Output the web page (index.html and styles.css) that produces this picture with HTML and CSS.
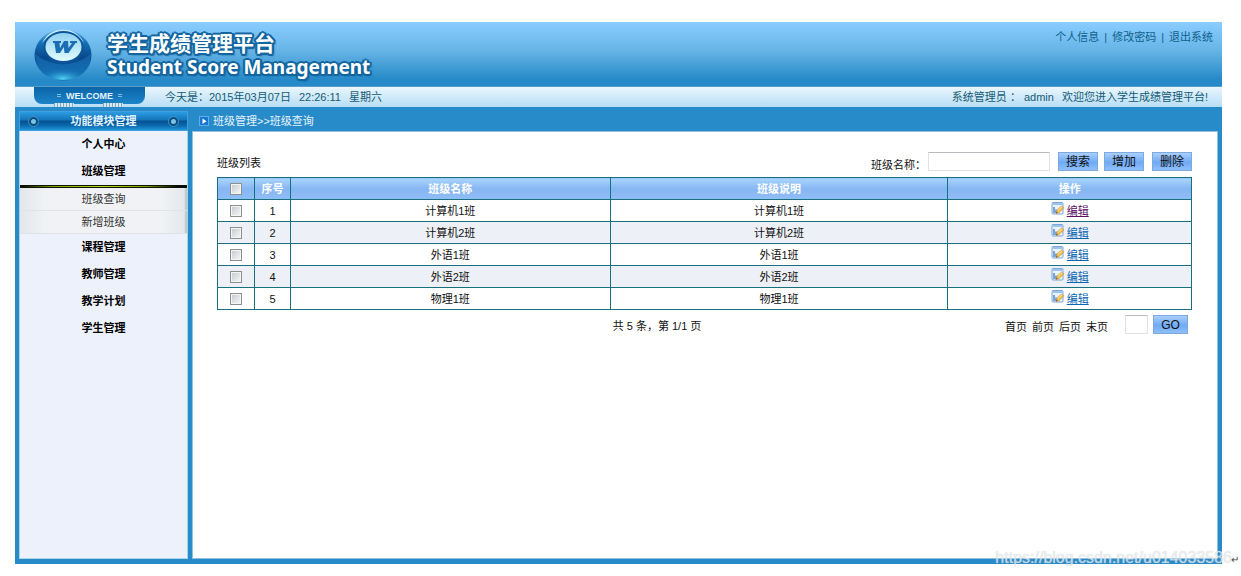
FILE: index.html
```html
<!DOCTYPE html>
<html lang="zh-CN">
<head>
<meta charset="utf-8">
<title>学生成绩管理平台</title>
<link rel="stylesheet" href="styles.css">
</head>
<body>
<svg class="defs" aria-hidden="true">
  <symbol id="edit-icon" viewBox="0 0 13 13">
    <rect x="1" y=".5" width="11" height="11.500" rx="1" fill="#e9f3fd" stroke="#7ba6d6"/>
    <path d="M1.500 2h10" stroke="#9cc4ee" stroke-width="2"/>
    <path d="M3 5v6M5 7.500v3.500" stroke="#3f78c4" stroke-width="1.300"/>
    <path d="M5 11.500l1-3.500 4.500-4 2.300 2-5 4.800z" fill="#f3bd4a" stroke="#c98f34" stroke-width=".6"/>
    <path d="M7 8.500l4-3.700" stroke="#fff0a8"/>
    <path d="M5 11.500l.6-1.700 1.300 1z" fill="#554"/>
  </symbol>
</svg>
<div class="page">
  <header class="header">
    <div class="brand">
      <svg class="logo" viewBox="0 0 60 54" aria-hidden="true">
        <defs>
          <linearGradient id="ball" x1="0" y1="0" x2="0" y2="1">
            <stop offset="0" stop-color="#5fb4ea"/><stop offset=".25" stop-color="#1672b8"/>
            <stop offset=".55" stop-color="#07478c"/><stop offset="1" stop-color="#1272b5"/>
          </linearGradient>
          <radialGradient id="glow" cx=".5" cy=".9" r=".6">
            <stop offset="0" stop-color="#4fd0f2"/><stop offset="1" stop-color="#1a7fc4" stop-opacity="0"/>
          </radialGradient>
          <linearGradient id="face" x1="0" y1="0" x2="0" y2="1">
            <stop offset="0" stop-color="#8fd0f2"/><stop offset="1" stop-color="#e2fbff"/>
          </linearGradient>
        </defs>
        <ellipse cx="30" cy="28" rx="28.500" ry="25.500" fill="url(#ball)"/>
        <path d="M2 27q28 21 56 0q-1 25-28 26.500Q4 52 2 27z" fill="#1b77bb" opacity=".55"/>
        <ellipse cx="30" cy="45" rx="20" ry="8" fill="url(#glow)"/>
        <path d="M9 16Q16 2.500 30 2.500T51 16Q43 5 30 5T9 16z" fill="#c4e9fb"/>
        <ellipse cx="30.500" cy="20" rx="20" ry="16" fill="#0d5599"/>
        <ellipse cx="30.500" cy="20" rx="18" ry="14" fill="url(#face)"/>
        <path d="M20 14h8v2h-1.500l.5 5 4-7h4l.5 7 3.500-5h-2v-2h7v2h-1.500l-7 10h-4l-.7-6-3.800 6h-4l-1.500-10H20z" fill="#1b6eb4"/>
      </svg>
      <h1 class="titles">
        <span class="title-cn">学生成绩管理平台</span>
        <span class="title-en">Student Score Management</span>
      </h1>
    </div>
    <nav class="account"><a href="#">个人信息</a><span>|</span><a href="#">修改密码</a><span>|</span><a href="#">退出系统</a></nav>
  </header>
  <div class="infobar">
    <div class="welcome"><i class="dash"></i>WELCOME<i class="dash"></i></div>
    <div class="today"><span>今天是：2015年03月07日</span><span>22:26:11</span><span>星期六</span></div>
    <div class="greeting"><span>系统管理员 ：&nbsp;admin</span><span>欢迎您进入学生成绩管理平台!</span></div>
  </div>
  <div class="body">
    <aside class="sidebar">
      <h2 class="side-title"><i class="dot"></i>功能模块管理<i class="dot"></i></h2>
      <nav class="menu">
        <a href="#">个人中心</a>
        <a href="#">班级管理</a>
        <div class="submenu">
          <a href="#">班级查询</a>
          <a href="#">新增班级</a>
        </div>
        <a href="#">课程管理</a>
        <a href="#">教师管理</a>
        <a href="#">教学计划</a>
        <a href="#">学生管理</a>
      </nav>
    </aside>
    <main class="main">
      <div class="crumbs">
        <svg class="crumb-icon" viewBox="0 0 10 10" aria-hidden="true"><rect x=".5" y=".5" width="9" height="9" fill="#1976cf" stroke="#5db0ee"/><path d="M3.500 2.500l4 2.700-4 2.700z" fill="#fff"/></svg>
        班级管理&gt;&gt;班级查询
      </div>
      <section class="panel">
        <div class="toolbar">
          <h3 class="list-title">班级列表</h3>
          <form class="search">
            <label for="name">班级名称：</label>
            <input class="field name" id="name" type="text">
            <button class="btn" type="button">搜索</button>
            <button class="btn add" type="button">增加</button>
            <button class="btn" type="button">删除</button>
          </form>
        </div>
        <table class="grid">
          <colgroup><col class="c-check"><col class="c-no"><col class="c-name"><col class="c-desc"><col class="c-op"></colgroup>
          <thead>
            <tr><th><input type="checkbox" aria-label="全选"></th><th>序号</th><th>班级名称</th><th>班级说明</th><th>操作</th></tr>
          </thead>
          <tbody>
            <tr><td><input type="checkbox" aria-label="选择 1"></td><td>1</td><td>计算机1班</td><td>计算机1班</td><td><svg class="edit"><use href="#edit-icon"/></svg><a class="seen" href="#">编辑</a></td></tr>
            <tr><td><input type="checkbox" aria-label="选择 2"></td><td>2</td><td>计算机2班</td><td>计算机2班</td><td><svg class="edit"><use href="#edit-icon"/></svg><a href="#">编辑</a></td></tr>
            <tr><td><input type="checkbox" aria-label="选择 3"></td><td>3</td><td>外语1班</td><td>外语1班</td><td><svg class="edit"><use href="#edit-icon"/></svg><a href="#">编辑</a></td></tr>
            <tr><td><input type="checkbox" aria-label="选择 4"></td><td>4</td><td>外语2班</td><td>外语2班</td><td><svg class="edit"><use href="#edit-icon"/></svg><a href="#">编辑</a></td></tr>
            <tr><td><input type="checkbox" aria-label="选择 5"></td><td>5</td><td>物理1班</td><td>物理1班</td><td><svg class="edit"><use href="#edit-icon"/></svg><a href="#">编辑</a></td></tr>
          </tbody>
        </table>
        <div class="pager">
          <span class="status">共 5 条，第 1/1 页</span>
          <nav class="pages"><a href="#">首页</a><a href="#">前页</a><a href="#">后页</a><a href="#">末页</a></nav>
          <input class="field pageno" type="text" aria-label="页码">
          <button class="btn go" type="button">GO</button>
        </div>
      </section>
    </main>
  </div>
  <div class="watermark"><span>https://blog.csdn.net/u014033586</span></div>
  <span class="return">↵</span>
</div>
</body>
</html>
```
FILE: styles.css
```css
*, *::before, *::after { box-sizing: border-box; }
body {
  margin: 0;
  background: #fff;
  color: #111;
  font: 11px/16px "Liberation Sans", "Noto Sans CJK SC", sans-serif;
}
a { color: inherit; text-decoration: none; }
h1, h2, h3 { margin: 0; font: inherit; }
.defs { position: absolute; width: 0; height: 0; }
.page {
  position: relative;
  display: flex;
  flex-direction: column;
  min-height: 100vh;
  padding: 22px 19px 12px 15px;
}

.header {
  display: flex;
  justify-content: space-between;
  height: 64px;
  padding: 5px 9px 0 18px;
  background: linear-gradient(#8acdff, #66b4e6 45%, #268ac8 90%);
}
.brand { display: flex; gap: 14px; }
.logo { width: 60px; height: 54px; }
.titles {
  display: flex;
  flex-direction: column;
  padding-top: 5px;
  color: #fff;
  font-weight: bold;
  text-shadow: 2px 0 #12659f, -2px 0 #12659f, 0 2px #12659f, 0 -2px #12659f,
    1px 2px #12659f, -1px 2px #12659f, 2px -1px #12659f, -2px -1px #12659f, 2px 2px 2px #0e5a92;
}
.title-cn { font-size: 21px; line-height: 24px; }
.title-en { font: bold 19px/22px "Noto Sans", sans-serif; }
.account { display: flex; gap: 5px; padding-top: 2px; color: #0f618b; }

.infobar {
  display: flex;
  height: 21px;
  border-top: 1px solid #5b9cc6;
  background: linear-gradient(#e9f6fe, #b7def5);
  color: #155b75;
  line-height: 20px;
}
.welcome {
  position: relative;
  display: flex;
  align-items: center;
  justify-content: center;
  gap: 5px;
  width: 111px;
  height: 17px;
  margin: 0 20px 0 19px;
  border-radius: 0 0 8px 8px;
  background: linear-gradient(#0b64a8, #1c84c8);
  color: #e4f3fd;
  font-size: 9px;
  font-weight: bold;
}
.welcome::before, .welcome::after {
  content: "";
  position: absolute;
  top: 16px;
  left: 20px;
  width: 20px;
  height: 4px;
  background: repeating-linear-gradient(90deg, #8aa9bd 0 1px, #d5e9f5 1px 3px);
}
.welcome::after { left: 69px; }
.dash { width: 4px; height: 3px; border: solid #7fbce4; border-width: 1px 0; }
.today { display: flex; gap: 8px; flex: 1; }
.greeting { display: flex; gap: 8px; padding-right: 14px; }

.body {
  display: flex;
  flex: 1;
  gap: 4px;
  padding: 4px 4px 5px;
  background: #288bc9;
}
.sidebar { display: flex; flex-direction: column; width: 169px; }
.side-title {
  display: flex;
  align-items: center;
  justify-content: space-between;
  height: 20px;
  padding: 0 9px;
  border: 1px solid #3fa0dd;
  background: linear-gradient(#2c9be0, #1474ba 45%, #04508f 50%, #0b69ad 75%, #1f93d8);
  color: #e0f2ff;
  font-weight: bold;
}
.dot {
  width: 9px;
  height: 9px;
  border: 2px solid #0b4c7c;
  border-radius: 50%;
  background: #7cc4e6;
  outline: 1px solid #3c93c9;
}
.menu {
  flex: 1;
  border: solid #a9d4e6;
  border-width: 0 1px 1px;
  background: #edf1fb;
  color: #000;
  text-align: center;
}
.menu > a { display: block; height: 27px; line-height: 27px; font-weight: bold; }
.submenu {
  background: linear-gradient(90deg, #e3e6ea, #f0f2f5 15%, #f0f2f5 85%, #e3e6ea);
  box-shadow: inset -3px 0 2px -1px #bfc4ca;
  color: #333;
}
.submenu::before {
  content: "";
  display: block;
  height: 3px;
  border: solid #0c1408;
  border-width: 1px 0;
  background: linear-gradient(90deg, #000, #88a000 20%, #c2df20 50%, #88a000 75%, #000 95%);
}
.submenu a { display: block; height: 23px; line-height: 23px; border-bottom: 1px solid #dfe3e8; }

.main { display: flex; flex: 1; flex-direction: column; }
.crumbs {
  display: flex;
  align-items: center;
  gap: 4px;
  height: 20px;
  padding-left: 7px;
  color: #e4f3fc;
}
.crumb-icon { width: 10px; height: 10px; }
.panel {
  flex: 1;
  padding: 20px 25px 0 24px;
  border: 1px solid #8fc0de;
  background: #fff;
}
.toolbar { display: flex; justify-content: space-between; height: 25px; }
.list-title { padding-top: 3px; }
.search { display: flex; align-items: flex-start; }
.search label { padding-top: 5px; }
.field {
  height: 19px;
  padding: 0 2px;
  border: 1px solid #dfe3e8;
  border-top-color: #b9bbc0;
  background: #fff;
  font: inherit;
}
.name { width: 122px; margin: 0 8px 0 2px; }
.btn {
  width: 40px;
  height: 19px;
  padding: 0;
  border: 1px solid #7ea9dc;
  background: linear-gradient(#a9cffc, #6faaf6 55%, #8fc0fb);
  color: #111;
  font: 12px/16px "Liberation Sans", "Noto Sans CJK SC", sans-serif;
}
.add { margin: 0 8px 0 6px; }

.grid { width: 100%; border-collapse: collapse; table-layout: fixed; border: 1px solid #16707e; }
.c-check { width: 3.8%; }
.c-no { width: 3.7%; }
.c-name { width: 32.8%; }
.c-desc { width: 34.7%; }
.c-op { width: 25%; }
.grid th, .grid td {
  height: 22px;
  padding: 0;
  border: 1px solid #16707e;
  line-height: 16px;
  text-align: center;
  vertical-align: middle;
}
.grid th { background: linear-gradient(#a9d4fb, #86b6f3 50%, #90bdf6); color: #fff; }
.grid tbody tr:nth-child(even) { background: #edf0f6; }
.grid input {
  appearance: none;
  display: block;
  width: 12px;
  height: 12px;
  margin: 0 auto;
  border: 1px solid #8e8f8f;
  background: linear-gradient(135deg, #c3c8cf, #f8f8f8);
  box-shadow: inset 0 0 0 1px #f4f4f4;
}
.grid a { color: #0b66b0; text-decoration: underline; vertical-align: middle; }
.grid a.seen { color: #5b1066; }
.edit { width: 13px; height: 13px; margin: 0 3px 4px 0; vertical-align: middle; }

.pager { display: flex; align-items: flex-start; padding: 5px 4px 0 0; }
.status { flex: 1; padding: 3px 0 0 92px; text-align: center; }
.pages { display: flex; gap: 5px; padding: 4px 17px 0 0; }
.pageno { width: 23px; margin-right: 5px; }
.go { width: 35px; }

.watermark {
  position: absolute;
  right: 9px;
  bottom: 8px;
  color: #e8ebed;
  font-size: 16px;
  line-height: 20px;
  opacity: .8;
  text-shadow: 0 0 1px #c8ccd0;
}
.return { position: absolute; right: 2px; bottom: 10px; color: #444; font-size: 10px; line-height: 12px; }
```
